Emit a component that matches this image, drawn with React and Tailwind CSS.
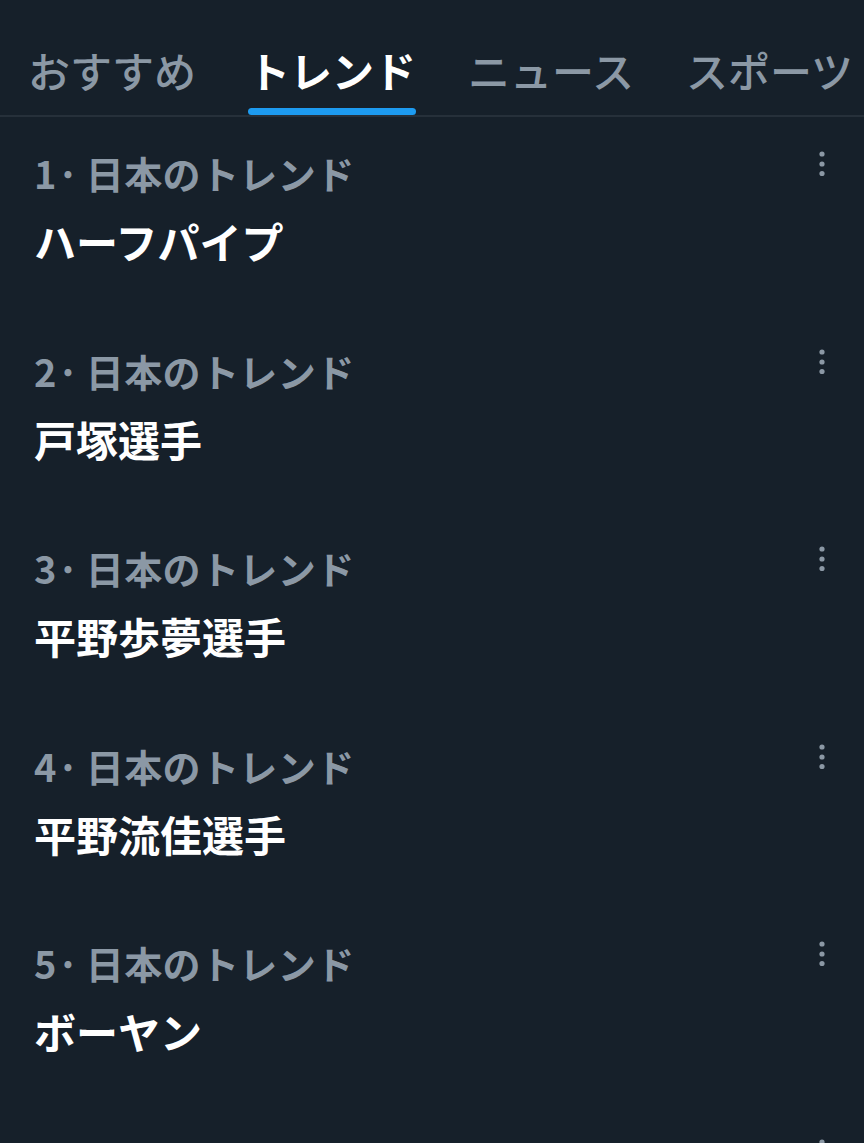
import React from 'react'

const tabs = [
  { label: 'おすすめ', active: false },
  { label: 'トレンド', active: true },
  { label: 'ニュース', active: false },
  { label: 'スポーツ', active: false },
]

const trends = [
  { rank: 1, title: 'ハーフパイプ' },
  { rank: 2, title: '戸塚選手' },
  { rank: 3, title: '平野歩夢選手' },
  { rank: 4, title: '平野流佳選手' },
  { rank: 5, title: 'ボーヤン' },
]

const MoreIcon = () => (
  <svg width="10" height="30" viewBox="0 0 10 30" className="text-[#8b98a5]">
    <circle cx="5" cy="5" r="2.6" fill="currentColor" />
    <circle cx="5" cy="15" r="2.6" fill="currentColor" />
    <circle cx="5" cy="24.5" r="2.6" fill="currentColor" />
  </svg>
)

const App = () => {
  return (
    <div
      className="w-[864px] h-[1143px] overflow-hidden bg-[#16202a]"
      style={{ fontFamily: '"Noto Sans CJK JP", "Noto Sans", sans-serif' }}
    >
      {/* Tabs */}
      <div className="flex whitespace-nowrap pl-[2px] border-b-2 border-[#26303a]">
        {tabs.map((tab) => (
          <div key={tab.label} className="flex flex-col items-center px-[26px] pt-[49px] shrink-0">
            <span
              className={`text-[42px] leading-[42px] ${
                tab.active ? 'font-bold text-white' : 'font-medium text-[#8b98a5]'
              }`}
            >
              {tab.label}
            </span>
            <div
              className={`mt-[17px] h-[7px] w-full rounded-full ${
                tab.active ? 'bg-[#1d9bf0]' : 'bg-transparent'
              }`}
            />
          </div>
        ))}
      </div>

      {/* Trend list */}
      <div>
        {trends.map((t) => (
          <div key={t.rank} className="flex justify-between h-[197.5px] pl-[34px] pr-[37px]">
            <div className="pt-[37px]">
              <p className="text-[38px] leading-[38px] font-bold tracking-[0.4px] text-[#8b98a5]">
                {t.rank}·<span className="ml-[6px]">日本のトレンド</span>
              </p>
              <p className="mt-[28px] text-[42px] leading-[42px] font-bold text-white">{t.title}</p>
            </div>
            <div className="pt-[32px]">
              <MoreIcon />
            </div>
          </div>
        ))}
        {/* next row, only its menu is in view */}
        <div className="flex justify-end h-[60px] pr-[37px]">
          <div className="pt-[32px]">
            <MoreIcon />
          </div>
        </div>
      </div>
    </div>
  )
}

export default App
